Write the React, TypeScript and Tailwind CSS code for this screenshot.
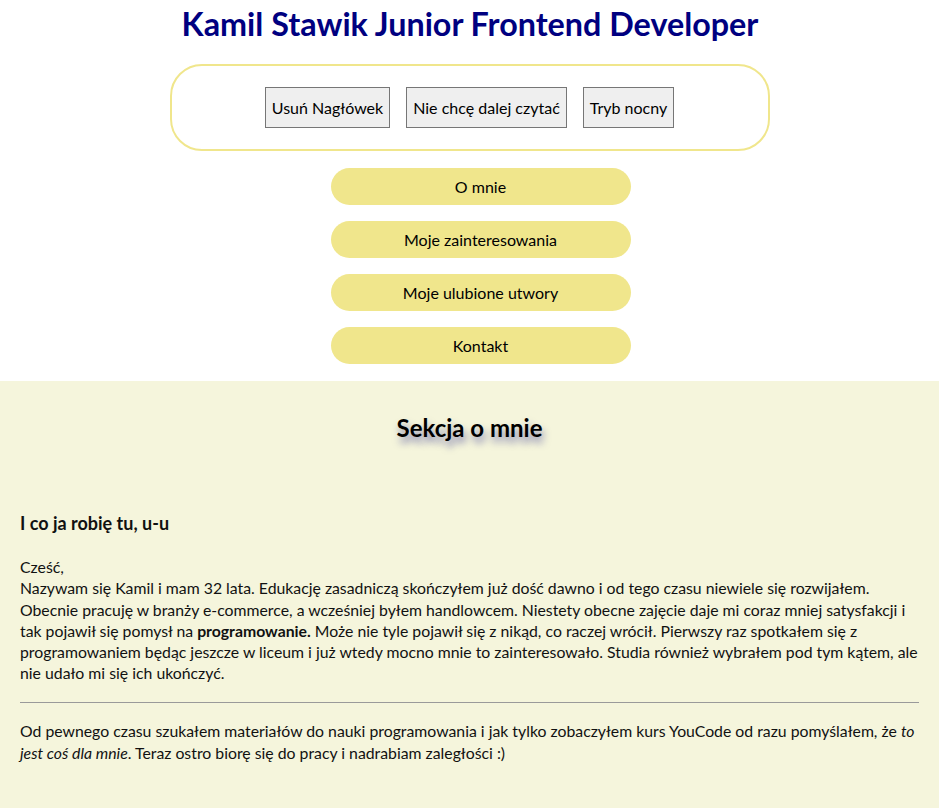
import React from 'react';

const navItems = ['O mnie', 'Moje zainteresowania', 'Moje ulubione utwory', 'Kontakt'];
const tools = ['Usuń Nagłówek', 'Nie chcę dalej czytać', 'Tryb nocny'];

const App: React.FC = () => {
  return (
    <div className="min-h-[808px] bg-white font-['Lato','Noto_Sans',sans-serif] text-[#111]">
      <header className="flex flex-col items-center">
        <h1 className="ml-[1px] mt-[5px] text-[32.3px] font-bold leading-[38px] text-[#000080]">
          Kamil Stawik Junior Frontend Developer
        </h1>
        <div className="mt-[21px] flex w-[600px] justify-center gap-4 rounded-[32px] border-2 border-[#f0e68c] py-[21px]">
          {tools.map((t) => (
            <button
              key={t}
              className="h-[41px] border border-[#767676] bg-[#efefef] px-[6px] text-[16px] text-black"
            >
              {t}
            </button>
          ))}
        </div>
        <nav className="mt-[17px] flex flex-col gap-4 pl-[22px]">
          {navItems.map((n) => (
            <a
              key={n}
              className="flex h-[37px] w-[300px] items-center justify-center rounded-full bg-[#f0e68c] text-[16px] text-black"
            >
              {n}
            </a>
          ))}
        </nav>
      </header>

      <section className="mt-[17px] bg-[#f5f5dc] px-5 pb-12 pt-[30px]">
        <h2 className="text-center text-[24px] font-bold leading-[34px] text-black [text-shadow:2px_6px_7px_rgba(30,30,140,0.5)]">
          Sekcja o mnie
        </h2>
        <h3 className="mt-[66px] text-[18px] font-bold leading-[24px]">I co ja robię tu, u-u</h3>
        <p className="mt-[21px] text-[15.8px] leading-[21.3px]">
          Cześć,
          <br />
          Nazywam się Kamil i mam 32 lata. Edukację zasadniczą skończyłem już dość dawno i od tego czasu
          niewiele się rozwijałem.
          <br />
          Obecnie pracuję w branży e-commerce, a wcześniej byłem handlowcem. Niestety obecne zajęcie daje mi
          coraz mniej satysfakcji i<br />
          tak pojawił się pomysł na <strong>programowanie.</strong> Może nie tyle pojawił się z nikąd, co
          raczej wrócił. Pierwszy raz spotkałem się z programowaniem będąc jeszcze w liceum i już wtedy mocno
          mnie to zainteresowało. Studia również wybrałem pod tym kątem, ale nie udało mi się ich ukończyć.
        </p>
        <hr className="mt-[18px] border-t-[1px] border-[#9a9a9a]" />
        <p className="mt-[17px] text-[15.8px] leading-[22px]">
          Od pewnego czasu szukałem materiałów do nauki programowania i jak tylko zobaczyłem kurs YouCode od
          razu pomyślałem, że <em>to</em>
          <br />
          <em>jest coś dla mnie</em>. Teraz ostro biorę się do pracy i nadrabiam zaległości :)
        </p>
      </section>
    </div>
  );
};

export default App;
